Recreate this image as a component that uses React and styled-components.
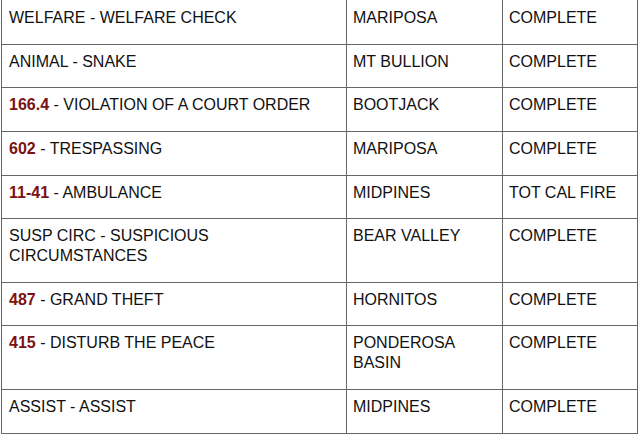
import React from "react";
import styled, { createGlobalStyle } from "styled-components";

const Global = createGlobalStyle`
  html, body { margin: 0; padding: 0; background: #ffffff; }
  body { font-family: "Liberation Sans", Arial, sans-serif; }
`;

const Page = styled.div`
  padding: 0 0 0 1px;
  margin-top: -1px;
`;

const Table = styled.table`
  border-collapse: collapse;
  table-layout: fixed;
  width: 637px;
  font-family: "Liberation Sans", Arial, sans-serif;
  font-size: 16px;
  line-height: 20px;
  color: #111;
`;

const Col = styled.col`
  width: ${(p) => p.$w}px;
`;

const Cell = styled.td`
  box-sizing: border-box;
  border: 1px solid #666;
  padding: 7px 6px 15.65px ${(p) => (p.$first ? 7 : 6)}px;
  vertical-align: top;
  text-align: left;

  tr:first-child > & {
    padding-top: 8px;
  }
`;

const Code = styled.span`
  color: #7b1113;
  font-weight: bold;
`;

const rows = [
  { code: null, desc: "WELFARE - WELFARE CHECK", loc: "MARIPOSA", status: "COMPLETE" },
  { code: null, desc: "ANIMAL - SNAKE", loc: "MT BULLION", status: "COMPLETE" },
  { code: "166.4", desc: "VIOLATION OF A COURT ORDER", loc: "BOOTJACK", status: "COMPLETE" },
  { code: "602", desc: "TRESPASSING", loc: "MARIPOSA", status: "COMPLETE" },
  { code: "11-41", desc: "AMBULANCE", loc: "MIDPINES", status: "TOT CAL FIRE" },
  { code: null, desc: ["SUSP CIRC - SUSPICIOUS", "CIRCUMSTANCES"], loc: "BEAR VALLEY", status: "COMPLETE" },
  { code: "487", desc: "GRAND THEFT", loc: "HORNITOS", status: "COMPLETE" },
  { code: "415", desc: "DISTURB THE PEACE", loc: ["PONDEROSA", "BASIN"], status: "COMPLETE" },
  { code: null, desc: "ASSIST - ASSIST", loc: "MIDPINES", status: "COMPLETE" },
];

const Lines = ({ value }) =>
  Array.isArray(value)
    ? value.map((v, i) => (
        <React.Fragment key={i}>
          {i > 0 && <br />}
          {v}
        </React.Fragment>
      ))
    : value;

export default function App() {
  return (
    <>
      <Global />
      <Page>
        <Table>
          <colgroup>
            <Col $w={345} />
            <Col $w={156} />
            <Col $w={135} />
          </colgroup>
          <tbody>
            {rows.map((r, i) => (
              <tr key={i}>
                <Cell $first>
                  {r.code && (
                    <>
                      <Code>{r.code}</Code>
                      {" - "}
                    </>
                  )}
                  <Lines value={r.desc} />
                </Cell>
                <Cell>
                  <Lines value={r.loc} />
                </Cell>
                <Cell>
                  <Lines value={r.status} />
                </Cell>
              </tr>
            ))}
          </tbody>
        </Table>
      </Page>
    </>
  );
}
